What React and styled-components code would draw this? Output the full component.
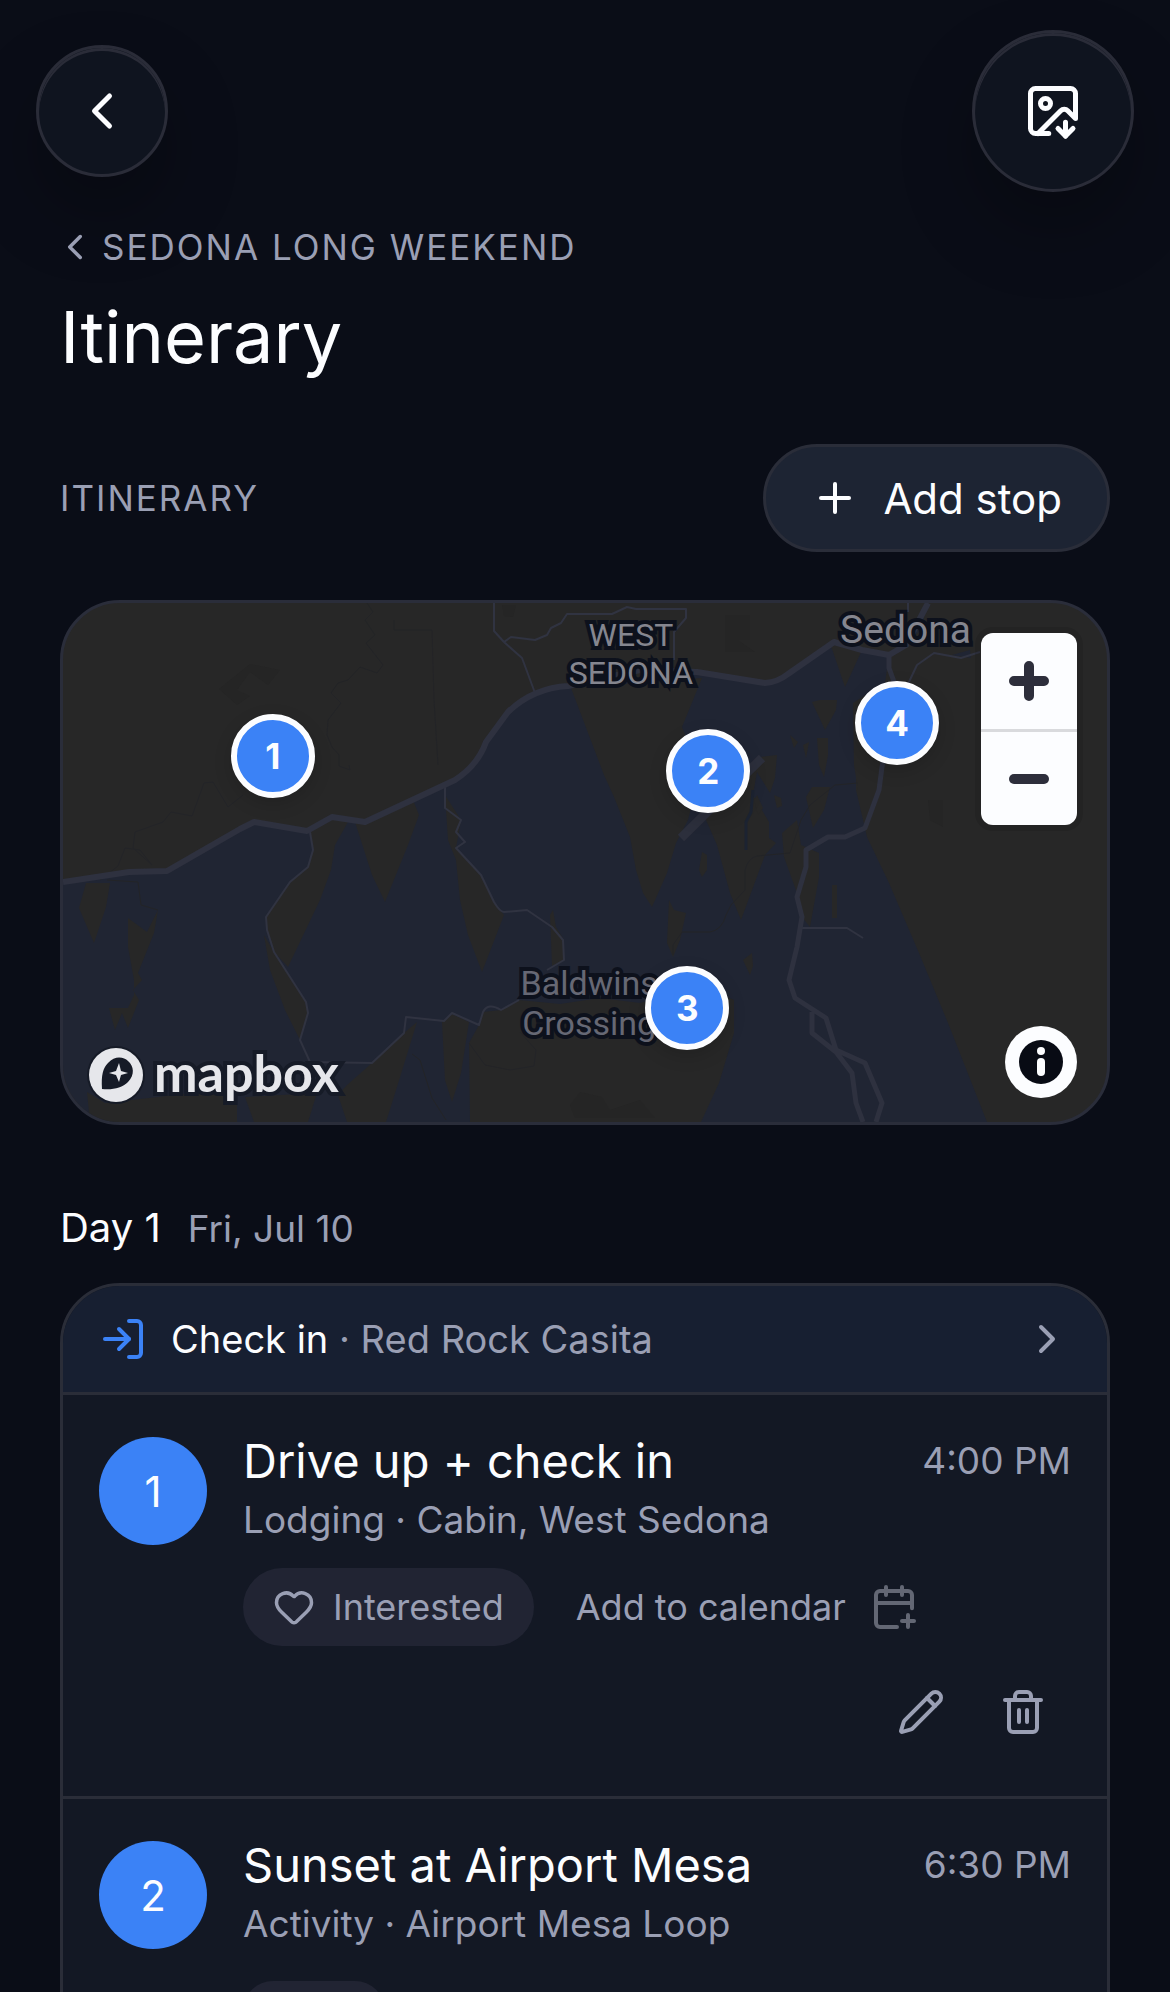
import React, { useState } from "react";
import styled, { createGlobalStyle } from "styled-components";
import {
  CalendarPlus,
  ChevronLeft,
  ChevronRight,
  Heart,
  ImageDown,
  LogIn,
  Pencil,
  Plus,
  Trash2,
} from "lucide-react";

const GlobalStyle = createGlobalStyle`
  * {
    box-sizing: border-box;
  }
  body {
    margin: 0;
    background-color: #0a0d17;
    color: #fcfdff;
    font-family: Inter, "Liberation Sans", sans-serif;
  }
  h1, h2, h3, p {
    margin: 0;
    font-weight: 400;
  }
  button {
    font-family: inherit;
    color: inherit;
    border: none;
    background: none;
    padding: 0;
    cursor: pointer;
  }
  svg {
    flex-shrink: 0;
  }
`;
const Screen = styled.div`
  height: 100vh;
  overflow-y: auto;
  scrollbar-width: none;
  background-color: #0a0d17;
`;
const TopBar = styled.header`
  display: flex;
  justify-content: space-between;
  align-items: center;
  padding: 30px 36px 0;
`;
const RoundButton = styled.button`
  display: flex;
  align-items: center;
  justify-content: center;
  width: ${(props) => props.$size}px;
  height: ${(props) => props.$size}px;
  border-radius: 50%;
  border: 3px solid #2a2c38;
  background-color: #0f141f;
  box-shadow: inset 0 3px 0 #2a2c38, 0 36px 72px rgba(0, 0, 0, 0.25);
`;
const Main = styled.main`
  padding: 28px 60px 60px;
`;
const BackLink = styled.a`
  display: flex;
  align-items: center;
  gap: 6px;
  width: fit-content;
  margin-left: -6px;
  color: #9a9fb4;
  font-size: 35px;
  line-height: 54px;
  letter-spacing: 2px;
  text-decoration: none;
`;
const Title = styled.h1`
  margin-top: 18px;
  font-size: 72px;
  line-height: 90px;
`;
const SectionHead = styled.div`
  display: flex;
  justify-content: space-between;
  align-items: center;
  margin: 62px 0 48px;
`;
const SectionTitle = styled.h2`
  color: #9a9fb4;
  font-size: 35px;
  line-height: 54px;
  letter-spacing: 2px;
`;
const AddButton = styled.button`
  display: flex;
  align-items: center;
  gap: 24px;
  height: 108px;
  padding: 0 45px;
  border: 3px solid #2a2d39;
  border-radius: 54px;
  background-color: #1d2433;
  font-size: 42px;
`;
const MapFrame = styled.section`
  position: relative;
  aspect-ratio: 2 / 1;
  border: 3px solid #2a2d3a;
  border-radius: 60px;
  background-color: #272727;
  overflow: hidden;
`;
const MapCanvas = styled.svg`
  display: block;
  width: 100%;
  height: 100%;
`;
const PlaceLabel = styled.span`
  position: absolute;
  left: ${(props) => props.$x}%;
  top: ${(props) => props.$y}%;
  transform: translate(-50%, -50%);
  color: ${(props) => props.$color};
  font-family: Roboto, sans-serif;
  font-size: ${(props) => props.$size}px;
  line-height: ${(props) => props.$line}px;
  text-align: center;
  white-space: pre;
  -webkit-text-stroke: 8px #0d111c;
  paint-order: stroke fill;
`;
const Marker = styled.button`
  position: absolute;
  left: ${(props) => props.$x}%;
  top: ${(props) => props.$y}%;
  transform: translate(-50%, -50%);
  width: 84px;
  height: 84px;
  border: 6px solid #fcfdff;
  border-radius: 50%;
  background-color: #3b82f6;
  box-shadow: 0 6px 18px rgba(0, 0, 0, 0.15);
  font-size: 35px;
  font-weight: 700;
`;
const ZoomControls = styled.div`
  position: absolute;
  top: 30px;
  right: 30px;
  display: flex;
  flex-direction: column;
  border-radius: 12px;
  background-color: #fcfdff;
  box-shadow: 0 0 0 6px rgba(0, 0, 0, 0.1);
`;
const ZoomButton = styled.button`
  display: flex;
  align-items: center;
  justify-content: center;
  width: 96px;
  height: 96px;
  color: #2d2e3b;

  & + & {
    border-top: 3px solid #d9dadd;
  }
`;
const MapLogo = styled.a`
  position: absolute;
  left: 24px;
  bottom: 12px;
  display: flex;
  align-items: center;
  gap: 9px;
  color: #e6e7eb;
  font-family: Lato, sans-serif;
  font-size: 52px;
  font-weight: 700;
  line-height: 64px;
  text-decoration: none;

  span {
    -webkit-text-stroke: 8px #161b27;
    paint-order: stroke fill;
    padding-bottom: 6px;
  }
`;
const InfoButton = styled.button`
  position: absolute;
  right: 30px;
  bottom: 24px;
  display: flex;
  align-items: center;
  justify-content: center;
  width: 72px;
  height: 72px;
  border-radius: 50%;
  background-color: #fcfdff;
`;
const DayHead = styled.div`
  display: flex;
  align-items: baseline;
  gap: 27px;
  margin: 73px 0 24px;
  line-height: 60px;
`;
const DayTitle = styled.h2`
  font-size: 40px;
`;
const DayDate = styled.p`
  color: #9a9fb4;
  font-size: 37px;
`;
const Card = styled.section`
  border: 3px solid #2a2d38;
  border-radius: 60px;
  background-color: #131824;
  overflow: hidden;
`;
const CheckIn = styled.button`
  display: flex;
  align-items: center;
  gap: 24px;
  width: 100%;
  height: 106px;
  padding: 0 36px;
  background-color: #171f31;
  font-size: 38px;
  text-align: left;
`;
const CheckInText = styled.span`
  flex: 1;
`;
const Muted = styled.span`
  color: #9a9fb4;
`;
const StopList = styled.ol`
  margin: 0;
  padding: 0;
  list-style: none;
`;
const StopRow = styled.li`
  display: flex;
  gap: 36px;
  padding: 36px;
  border-top: 3px solid #2a2d38;
`;
const StopNumber = styled.div`
  display: flex;
  align-items: center;
  justify-content: center;
  flex-shrink: 0;
  width: 108px;
  height: 108px;
  margin-top: 6px;
  border-radius: 50%;
  background-color: #3b82f6;
  font-size: 42px;
`;
const StopBody = styled.div`
  flex: 1;
`;
const StopHead = styled.div`
  display: flex;
  justify-content: space-between;
  align-items: center;
  line-height: 60px;
`;
const StopName = styled.h3`
  font-size: 47px;
`;
const StopTime = styled.span`
  color: #9a9fb4;
  font-size: 37px;
`;
const StopDetail = styled.p`
  color: #9a9fb4;
  font-size: 37px;
  line-height: 57px;
`;
const Actions = styled.div`
  display: flex;
  align-items: center;
  gap: 42px;
  height: 78px;
  margin-top: 20px;
`;
const InterestPill = styled.button`
  display: flex;
  align-items: center;
  justify-content: center;
  gap: 18px;
  height: ${(props) => (props.$compact ? 60 : 78)}px;
  min-width: 142px;
  padding: 0 30px;
  border-radius: 39px;
  background-color: #212433;
  color: #9a9fb4;
  font-size: 36px;
`;
const CalendarButton = styled.button`
  display: flex;
  align-items: center;
  gap: 24px;
  color: #9a9fb4;
  font-size: 36px;

  svg {
    color: #636774;
  }
`;
const EditActions = styled.div`
  display: flex;
  justify-content: flex-end;
  gap: 6px;
  margin-top: 18px;
`;
const IconButton = styled.button`
  display: flex;
  align-items: center;
  justify-content: center;
  width: 96px;
  height: 96px;
  color: #9a9fb4;
`;

const markers = [
  { id: 1, x: 20.1, y: 29.5 },
  { id: 2, x: 61.8, y: 32.4 },
  { id: 3, x: 59.8, y: 78 },
  { id: 4, x: 79.9, y: 23.1 },
];

const places = [
  { name: "WEST\nSEDONA", x: 54.4, y: 9.9, size: 32, line: 38, color: "#85868f" },
  { name: "Sedona", x: 80.7, y: 5.2, size: 39, line: 44, color: "#85868f" },
  { name: "Baldwins\nCrossing", x: 50.4, y: 77, size: 34, line: 40, color: "#666874" },
];

const stops = [
  {
    id: 1,
    name: "Drive up + check in",
    detail: "Lodging · Cabin, West Sedona",
    time: "4:00 PM",
    open: true,
  },
  {
    id: 2,
    name: "Sunset at Airport Mesa",
    detail: "Activity · Airport Mesa Loop",
    time: "6:30 PM",
    open: false,
  },
];

const highway =
  "M63 882L129 872L167 871L240 829L254 822L307 831L332 817L365 822L455 780Q478 765 486 742L508 712Q533 688 568 686L640 670L697 672L765 683Q778 682 788 674L834 642L862 650L889 655L906 645L928 603";

const dryLand = [
  "310,832 332,817 348,822 335,845 331,870 320,900 288,967 274,952 267,930 266,917 290,882 308,867 313,850",
  "264,935 274,952 306,1002 308,1013 300,1040 285,1010 270,970",
  "355,822 372,875 385,902 408,845 419,815 413,800 365,822",
  "445,795 461,820 456,848 481,875 494,902 504,915 482,972 468,935 460,900 456,860 448,840",
  "571,688 702,678 682,727 700,771 688,820 676,843 667,873 652,907 643,893 636,870 630,837 614,797 604,775",
  "706,820 700,800 745,770 760,757 777,755 775,778 770,793 757,772 753,795 769,822 769,838 776,843 765,855 741,920 730,893 717,845",
  "754,800 757,795 763,808 758,815",
  "774,795 781,798 782,806 777,808",
  "830,643 845,687 862,650",
  "812,702 820,700 837,700 836,710 825,730",
  "817,738 828,738 828,755 824,777 819,765",
  "790,735 798,742 794,748",
  "803,745 809,742 806,758",
  "853,703 870,692 870,780 858,790 854,765",
  "782,833 797,820 801,845 819,853 819,877 810,927 802,917 797,893 784,857",
  "806,797 812,787 830,787 824,810 813,828",
  "702,852 707,855 707,870 702,877 699,870",
  "832,885 837,885 837,918 832,918",
  "669,900 674,910 686,913 680,940 673,957 667,943",
  "743,960 752,953 753,966 750,975",
  "550,915 553,910 556,927 564,940 564,960 552,966",
  "86,883 110,883 106,907 94,943 79,908",
  "128,918 147,932 158,910 154,933 138,973 142,980 133,990 139,1000 128,1028 122,1013 115,1030 109,1008 128,1008 134,995 134,980 128,947",
  "87,1092 105,1103 237,1088 237,1122 90,1122",
  "245,1097 317,1093 308,1122 254,1122",
  "338,1095 347,1122 386,1122 397,1087 417,1022 404,1033 372,1063 347,1085",
  "442,1022 452,1014 469,1022 461,1073 452,1102 445,1080",
  "469,1043 479,1025 483,1012 501,1010 519,1000 560,1004 600,998 640,1003 700,985 734,1000 734,1033 719,1083 701,1122 470,1122",
];

const sideRoads = [
  "M310 832L313 850L308 867L290 882L266 917L267 930L274 952L306 1002L308 1013L300 1040L310 1062L372 1063L404 1033L406 1017L444 1021L452 1013L479 1025L483 1012Q488 1002 501 1010L519 1000",
  "M445 785V808L461 820L456 832L465 842L456 848L481 875L494 902Q500 912 504 912L527 910L552 927L563 940L564 960L547 970",
  "M494 603V631L504 642L522 658L535 693",
  "M504 642L511 637L535 640L547 635L551 628L561 623L567 614H612L627 607L636 609H686V618L674 632V660",
  "M980 652L961 658L934 653L917 665L908 684",
  "M908 603V612",
  "M802 928H847L863 938",
];

const trails = [
  "M367 603L373 612L365 620L375 635L366 643L383 665L377 673L360 667L348 680L338 683L331 693L341 703L328 720L327 735L332 747L339 755V766L350 770L349 765",
  "M100 880L118 866L125 848L140 850L152 865L133 848L135 832L163 822L171 812L192 816L204 783L213 782L228 807L243 795",
  "M107 880L138 882L141 905L158 910",
  "M412 1054L420 1060L432 1098L446 1120",
  "M673 955V945L682 932H710Q722 930 726 915L731 905L745 890V870Q748 858 757 856L790 853L801 820L810 805L835 785L858 783",
  "M394 620V630H432L434 700L438 765",
  "M469 1043L485 1065L510 1070L534 1066L536 1050L520 1032",
];

const MapDrawing = () => (
  <MapCanvas
    viewBox="63 603 1044 519"
    preserveAspectRatio="xMidYMid slice"
    fill="none"
    strokeLinejoin="round"
    aria-hidden="true"
  >
    <path
      d="M63 882L129 872L167 871L254 822L307 831L332 817L365 822L455 780Q478 765 486 742L508 712Q533 688 568 686L697 672L778 682L834 642L889 655L884 690L856 720V790L867 837L889 883L919 953L948 1023L987 1122H63Z"
      fill="#202533"
    />
    <path d="M928 603L908 640L922 630L926 603ZM952 655L970 650L971 658Z" fill="#202533" />
    {dryLand.map((points) => (
      <polygon key={points} points={points} fill="#272727" />
    ))}
    <g fill="#252525">
      <path d="M219 689L250 664L280 670L268 685L250 672L237 690L250 696L237 705Z" />
      <path d="M502 605H516L513 617L504 616ZM928 800H943V827L930 820Z" />
      <path d="M570 1105L580 1092L602 1097L610 1110L640 1100L655 1118H575Z" />
      <path d="M725 615H750V640H738L755 652H725Z" />
    </g>
    <g stroke="#232427" strokeWidth="1">
      {trails.map((d) => (
        <path key={d} d={d} />
      ))}
    </g>
    <path d="M753 790L751 812L746 822V850" stroke="#1c2331" strokeWidth="3" />
    <g stroke="#303341" strokeWidth="2">
      {sideRoads.map((d) => (
        <path key={d} d={d} />
      ))}
    </g>
    <path d={highway} stroke="#2e313f" strokeWidth="6" />
    <path
      d="M889 655V668L897 690L882 767L879 790L865 828L845 837H828L806 850V867L797 897L802 917L797 947L789 980L795 998L826 1018L836 1050L865 1063L882 1103L876 1122M812 1012V1033L836 1052L852 1073L856 1103L863 1122"
      stroke="#2e313f"
      strokeWidth="5"
    />
    <path d="M681 838L762 758" stroke="#2c2f3c" strokeWidth="9" />
  </MapCanvas>
);

const TripMap = () => (
  <MapFrame aria-label="Map">
    <MapDrawing />
    {places.map((place) => (
      <PlaceLabel
        key={place.name}
        $x={place.x}
        $y={place.y}
        $size={place.size}
        $line={place.line}
        $color={place.color}
      >
        {place.name}
      </PlaceLabel>
    ))}
    {markers.map((marker) => (
      <Marker key={marker.id} $x={marker.x} $y={marker.y}>
        {marker.id}
      </Marker>
    ))}
    <ZoomControls>
      <ZoomButton aria-label="Zoom in">
        <svg width="40" height="40" stroke="currentColor" strokeWidth="10" strokeLinecap="round">
          <path d="M20 5V35M5 20H35" />
        </svg>
      </ZoomButton>
      <ZoomButton aria-label="Zoom out">
        <svg width="40" height="40" stroke="currentColor" strokeWidth="10" strokeLinecap="round">
          <path d="M5 20H35" />
        </svg>
      </ZoomButton>
    </ZoomControls>
    <MapLogo href="#mapbox">
      <svg width="58" height="58" viewBox="0 0 58 58">
        <circle cx="29" cy="29" r="29" fill="#161b27" />
        <circle cx="29" cy="29" r="27" fill="#e6e7eb" />
        <path
          d="M15 43C14 29 16 22 21 17C28 9 37 11 41 15C47 20 48 29 41 36C35 42 26 44 15 43Z"
          fill="#161b27"
        />
        <path d="M32 17L34 25L41 27L34 29L32 36L29 29L22 27L29 25Z" fill="#e6e7eb" />
      </svg>
      <span>mapbox</span>
    </MapLogo>
    <InfoButton aria-label="Map information">
      <svg width="44" height="44">
        <circle cx="22" cy="22" r="22" fill="#080b14" />
        <circle cx="22" cy="11" r="4" fill="#fcfdff" />
        <rect x="18" y="18" width="8" height="18" rx="4" fill="#fcfdff" />
      </svg>
    </InfoButton>
  </MapFrame>
);

const Stop = ({ stop }) => {
  const [interested, setInterested] = useState(false);
  return (
    <StopRow>
      <StopNumber>{stop.id}</StopNumber>
      <StopBody>
        <StopHead>
          <StopName>{stop.name}</StopName>
          <StopTime>{stop.time}</StopTime>
        </StopHead>
        <StopDetail>{stop.detail}</StopDetail>
        <Actions>
          <InterestPill
            $compact={!stop.open}
            aria-label="Interested"
            aria-pressed={interested}
            onClick={() => setInterested(!interested)}
          >
            <Heart size={42} />
            {stop.open && "Interested"}
          </InterestPill>
          {stop.open && (
            <CalendarButton>
              Add to calendar
              <CalendarPlus size={48} />
            </CalendarButton>
          )}
        </Actions>
        {stop.open && (
          <EditActions>
            <IconButton aria-label="Edit stop">
              <Pencil size={48} />
            </IconButton>
            <IconButton aria-label="Delete stop">
              <Trash2 size={48} />
            </IconButton>
          </EditActions>
        )}
      </StopBody>
    </StopRow>
  );
};

const App = () => {
  return (
    <Screen>
      <GlobalStyle />
      <TopBar>
        <RoundButton $size={132} aria-label="Back">
          <ChevronLeft size={60} />
        </RoundButton>
        <RoundButton $size={162} aria-label="Save image">
          <ImageDown size={60} />
        </RoundButton>
      </TopBar>
      <Main>
        <BackLink href="#trip">
          <ChevronLeft size={42} />
          SEDONA LONG WEEKEND
        </BackLink>
        <Title>Itinerary</Title>
        <SectionHead>
          <SectionTitle>ITINERARY</SectionTitle>
          <AddButton>
            <Plus size={48} />
            Add stop
          </AddButton>
        </SectionHead>
        <TripMap />
        <DayHead>
          <DayTitle>Day 1</DayTitle>
          <DayDate>Fri, Jul 10</DayDate>
        </DayHead>
        <Card>
          <CheckIn>
            <LogIn size={48} color="#3b82f6" />
            <CheckInText>
              Check in <Muted>· Red Rock Casita</Muted>
            </CheckInText>
            <ChevronRight size={48} color="#9a9fb4" />
          </CheckIn>
          <StopList>
            {stops.map((stop) => (
              <Stop key={stop.id} stop={stop} />
            ))}
          </StopList>
        </Card>
      </Main>
    </Screen>
  );
};

export default App;
